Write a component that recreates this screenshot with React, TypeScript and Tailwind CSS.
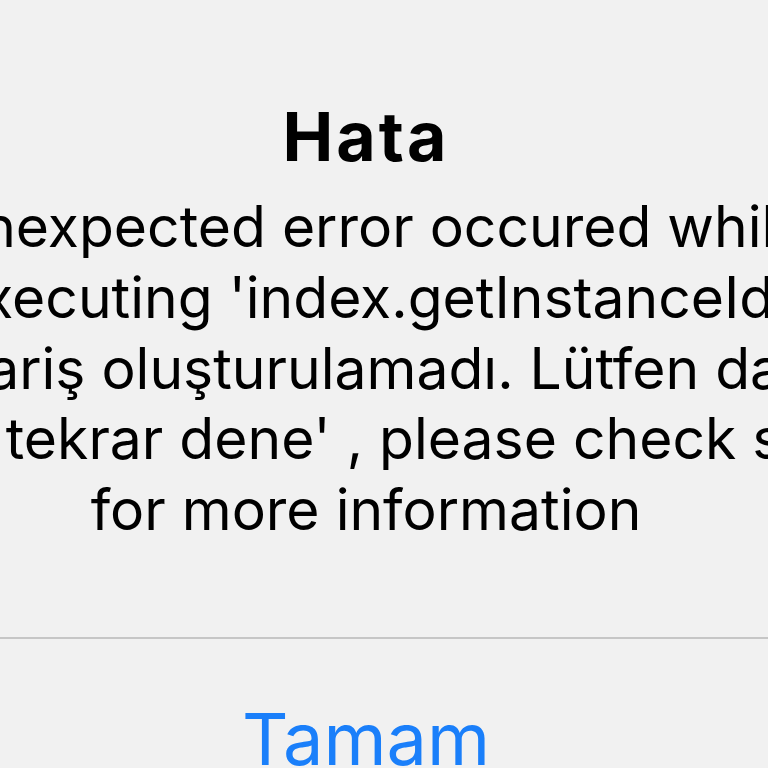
import React from "react";

export default function App() {
  const lines: { t: string; c: string }[] = [
    { t: "An unexpected error occured while", c: "mr-[64px]" },
    { t: "executing 'index.getInstanceId':", c: "ml-[26px]" },
    { t: "'Sipariş oluşturulamadı. Lütfen daha", c: "" },
    { t: "sonra tekrar dene' , please check server", c: "ml-[30px]" },
    { t: "for more information", c: "" },
  ];
  return (
    <div
      className="w-[768px] h-[768px] overflow-hidden bg-[#f1f1f1] text-black"
      style={{ fontFamily: "Inter, 'Noto Sans', sans-serif" }}
    >
      <div className="w-[1200px] ml-[-234px] flex flex-col">
        <div className="pt-[98px] text-center text-[68px] font-bold leading-[76px] tracking-[3px]">
          Hata
        </div>
        <div className="mt-[18px] flex flex-col items-center">
          {lines.map((l) => (
            <div
              key={l.t}
              className={`whitespace-nowrap text-center text-[57px] leading-[70.75px] ${l.c}`}
            >
              {l.t}
            </div>
          ))}
        </div>
        <div className="mt-[91px] h-[2px] bg-[#c6c6c6]" />
        <div className="pt-[60px] text-center text-[72px] leading-[80px] text-[#1a7ffa]">
          Tamam
        </div>
      </div>
    </div>
  );
}
